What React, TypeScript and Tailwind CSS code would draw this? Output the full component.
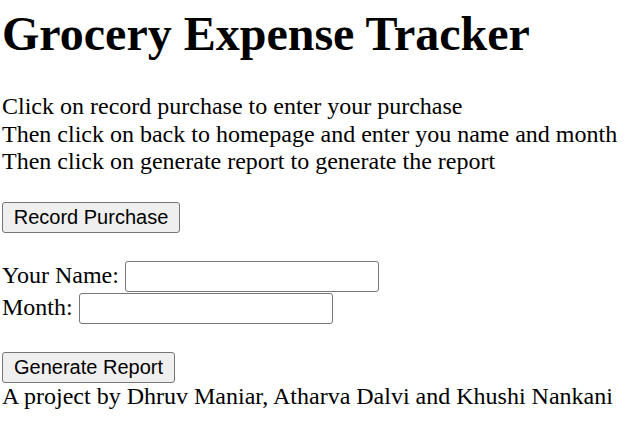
const sans = { fontFamily: '"Liberation Sans", Arial, sans-serif' };

export default function App() {
  return (
    <div className="bg-white text-black pl-[2px] pt-[6px]" style={{ fontFamily: '"Liberation Serif", "Times New Roman", serif' }}>
      <h1 className="text-[48px] font-bold leading-[55px] m-0">Grocery Expense Tracker</h1>
      <div className="mt-[32px] text-[24px] leading-[27.6px]">
        <div>Click on record purchase to enter your purchase</div>
        <div>Then click on back to homepage and enter you name and month</div>
        <div>Then click on generate report to generate the report</div>
      </div>
      <div className="mt-[26px] flex">
        <button className="h-[31px] w-[178px] flex items-center justify-center bg-[#efefef] border border-[#767676] rounded-[3px] text-[20px] leading-none text-black" style={sans}>Record Purchase</button>
      </div>
      <div className="mt-[28px] text-[24px] leading-[27.6px]">
        <div className="flex items-start h-[32px]">
          <span className="mt-[1px]">Your Name:</span>
          <input type="text" className="ml-[6px] w-[254px] h-[31px] border border-[#767676] rounded-[3px] bg-white outline-none" />
        </div>
        <div className="flex items-start h-[32px]">
          <span className="mt-[1px]">Month:</span>
          <input type="text" className="ml-[6px] w-[254px] h-[31px] border border-[#767676] rounded-[3px] bg-white outline-none" />
        </div>
      </div>
      <div className="mt-[27px] flex">
        <button className="h-[31px] w-[173px] flex items-center justify-center bg-[#efefef] border border-[#767676] rounded-[3px] text-[20px] leading-none text-black" style={sans}>Generate Report</button>
      </div>
      <div className="text-[24px] leading-[27.6px]">A project by Dhruv Maniar, Atharva Dalvi and Khushi Nankani</div>
    </div>
  );
}
